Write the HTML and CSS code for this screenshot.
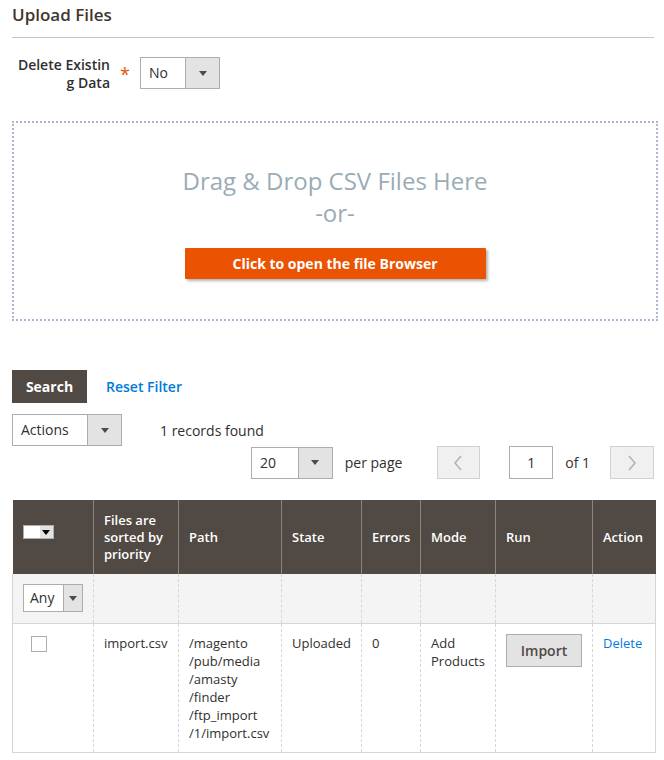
FILE: index.html
```html
<!DOCTYPE html>
<html lang="en">
<head>
  <meta charset="UTF-8">
  <title>Upload Files</title>
  <link rel="stylesheet" href="styles.css">
</head>
<body>
  <!-- Upload Section -->
  <div class="section-title">Upload Files</div>

  <div class="field">
    <label class="field-label">Delete Existin<br>g Data</label>
    <span class="required">*</span>
    <div class="select select-no">
      <span class="select-value">No</span>
      <span class="select-arrow"><i class="caret"></i></span>
    </div>
  </div>

  <div class="dropzone">
    <div class="dropzone-text">Drag &amp; Drop CSV Files Here</div>
    <div class="dropzone-text">-or-</div>
    <button class="btn-browse">Click to open the file Browser</button>
  </div>

  <!-- Grid Controls -->
  <div class="grid-actions">
    <button class="btn-search">Search</button>
    <a class="link-reset">Reset Filter</a>
  </div>

  <div class="grid-row">
    <div class="select select-actions">
      <span class="select-value">Actions</span>
      <span class="select-arrow"><i class="caret"></i></span>
    </div>
    <span class="records">1 records found</span>
  </div>

  <div class="pager">
    <div class="select select-limit">
      <span class="select-value">20</span>
      <span class="select-arrow"><i class="caret"></i></span>
    </div>
    <span class="per-page">per page</span>
    <button class="page-btn">
      <svg width="10" height="16" viewBox="0 0 10 16"><path d="M8 1 L2 8 L8 15" fill="none" stroke="#b3b3b3" stroke-width="1.6"/></svg>
    </button>
    <div class="page-input">1</div>
    <span class="page-of">of 1</span>
    <button class="page-btn">
      <svg width="10" height="16" viewBox="0 0 10 16"><path d="M2 1 L8 8 L2 15" fill="none" stroke="#b3b3b3" stroke-width="1.6"/></svg>
    </button>
  </div>

  <!-- Grid -->
  <table class="grid">
    <thead>
      <tr>
        <th class="col-check">
          <span class="mass-select"><span class="mass-box"></span><span class="mass-arrow"><i class="caret caret-dark"></i></span></span>
        </th>
        <th class="col-file">Files are sorted by priority</th>
        <th class="col-path">Path</th>
        <th class="col-state">State</th>
        <th class="col-errors">Errors</th>
        <th class="col-mode">Mode</th>
        <th class="col-run">Run</th>
        <th class="col-action">Action</th>
      </tr>
    </thead>
    <tbody>
      <tr class="filters">
        <td>
          <div class="select select-any">
            <span class="select-value">Any</span>
            <span class="select-arrow"><i class="caret"></i></span>
          </div>
        </td>
        <td></td><td></td><td></td><td></td><td></td><td></td><td></td>
      </tr>
      <tr class="data-row">
        <td><span class="checkbox"></span></td>
        <td>import.csv</td>
        <td>/magento<br>/pub/media<br>/amasty<br>/finder<br>/ftp_import<br>/1/import.csv</td>
        <td>Uploaded</td>
        <td>0</td>
        <td>Add<br>Products</td>
        <td><button class="btn-import">Import</button></td>
        <td><a class="link-delete">Delete</a></td>
      </tr>
    </tbody>
  </table>
</body>
</html>
```

FILE: styles.css
```css
/* General Reset */
* {
  margin: 0;
  padding: 0;
  box-sizing: border-box;
}

body {
  font-family: 'Open Sans', sans-serif;
  font-size: 14px;
  color: #303030;
  background: #fff;
  padding: 0 10px 0 12px;
}

/* Section Title */
.section-title {
  font-size: 17px;
  font-weight: 600;
  color: #41362f;
  line-height: 24px;
  padding-top: 3px;
  padding-bottom: 10px;
  border-bottom: 1px solid #cac6c3;
}

/* Field */
.field {
  display: flex;
  align-items: flex-start;
  margin-top: 19px;
}

.field-label {
  width: 98px;
  text-align: right;
  font-weight: 600;
  color: #303030;
  line-height: 18px;
  margin-top: -1px;
}

.required {
  color: #eb5202;
  font-size: 18px;
  width: 30px;
  text-align: center;
  line-height: 34px;
}

/* Select */
.select {
  display: flex;
  border: 1px solid #adadad;
  background: #fff;
  height: 32px;
}

.select-value {
  flex: 1;
  padding-left: 8px;
  line-height: 30px;
  color: #303030;
}

.select-arrow {
  width: 34px;
  background: #e3e3e3;
  border-left: 1px solid #adadad;
  display: flex;
  align-items: center;
  justify-content: center;
}

.caret {
  width: 0;
  height: 0;
  border-left: 4px solid transparent;
  border-right: 4px solid transparent;
  border-top: 5px solid #514943;
}

.select-no {
  width: 80px;
}

/* Drop Zone */
.dropzone {
  margin-top: 29px;
  border: 2px dotted #adb5d8;
  height: 200px;
  width: 646px;
  text-align: center;
  padding-top: 42px;
}

.dropzone-text {
  font-size: 24px;
  line-height: 32px;
  color: #9aacb6;
}

.btn-browse {
  margin-top: 19px;
  width: 301px;
  height: 31px;
  background: #eb5202;
  color: #fff;
  border: none;
  border-radius: 1px;
  font-family: 'Open Sans', sans-serif;
  font-size: 14px;
  font-weight: 700;
  box-shadow: 2px 2px 3px rgba(0, 0, 0, 0.3);
}

/* Grid Actions */
.grid-actions {
  display: flex;
  align-items: center;
  margin-top: 49px;
}

.btn-search {
  width: 75px;
  height: 33px;
  background: #514943;
  color: #fff;
  border: none;
  font-family: 'Open Sans', sans-serif;
  font-size: 14px;
  font-weight: 700;
}

.link-reset {
  margin-left: 19px;
  color: #007bdb;
  font-weight: 600;
}

.grid-row {
  display: flex;
  align-items: center;
  margin-top: 11px;
}

.select-actions {
  width: 110px;
}

.records {
  margin-left: 38px;
}

/* Pager */
.pager {
  display: flex;
  align-items: center;
  margin-left: 239px;
  height: 33px;
}

.select-limit {
  width: 82px;
}

.per-page {
  margin-left: 12px;
  width: 92px;
}

.page-btn {
  width: 44px;
  height: 33px;
  background: #f0f0f0;
  border: 1px solid #d1d1d1;
  display: flex;
  align-items: center;
  justify-content: center;
}

.page-input {
  margin-left: 29px;
  width: 44px;
  height: 33px;
  border: 1px solid #adadad;
  text-align: center;
  line-height: 31px;
}

.page-of {
  margin-left: 12px;
  width: 45px;
}

/* Grid Table */
.grid {
  margin-top: 21px;
  width: 643px;
  border-collapse: collapse;
  table-layout: fixed;
}

.grid th {
  background: #514943;
  color: #fff;
  font-weight: 600;
  font-size: 13px;
  text-align: left;
  line-height: 17px;
  padding: 0 10px;
  height: 74px;
  border-left: 1px solid #8a837f;
}

.grid th:first-child {
  border-left: none;
}

.col-check { width: 81px; }
.col-file { width: 85px; }
.col-path { width: 103px; }
.col-state { width: 80px; }
.col-errors { width: 59px; }
.col-mode { width: 75px; }
.col-run { width: 97px; }
.col-action { width: 63px; }

.mass-select {
  display: inline-flex;
  border: 1px solid #adadad;
  height: 14px;
  margin-top: -12px;
  vertical-align: middle;
}

.mass-box {
  width: 16px;
  background: #fff;
}

.mass-arrow {
  width: 13px;
  background: #e3e3e3;
  display: flex;
  align-items: center;
  justify-content: center;
}

.caret-dark {
  border-top-color: #000;
}

.grid td {
  border-left: 1px dashed #d6d6d6;
  vertical-align: top;
  padding: 10px 10px;
  font-size: 13px;
  line-height: 18px;
  color: #303030;
}

.grid td:first-child {
  border-left: 1px solid #d6d6d6;
}

.grid td:last-child {
  border-right: 1px solid #d6d6d6;
}

.filters td {
  background: #f4f4f4;
  height: 49px;
  border-bottom: 1px solid #d6d6d6;
  padding: 10px 10px 0 10px;
}

.select-any {
  width: 60px;
  height: 28px;
}

.select-any .select-value {
  padding-left: 6px;
  line-height: 26px;
  font-size: 14px;
}

.select-any .select-arrow {
  width: 19px;
}

.data-row td {
  height: 127px;
  border-bottom: 1px solid #d6d6d6;
}

.checkbox {
  display: block;
  width: 16px;
  height: 16px;
  border: 1px solid #adadad;
  margin-left: 8px;
  margin-top: 2px;
}

.btn-import {
  width: 76px;
  height: 33px;
  background: #e3e3e3;
  border: 1px solid #adadad;
  font-family: 'Open Sans', sans-serif;
  font-size: 14px;
  font-weight: 600;
  color: #514943;
}

.link-delete {
  color: #007bdb;
  font-size: 13px;
}
```
